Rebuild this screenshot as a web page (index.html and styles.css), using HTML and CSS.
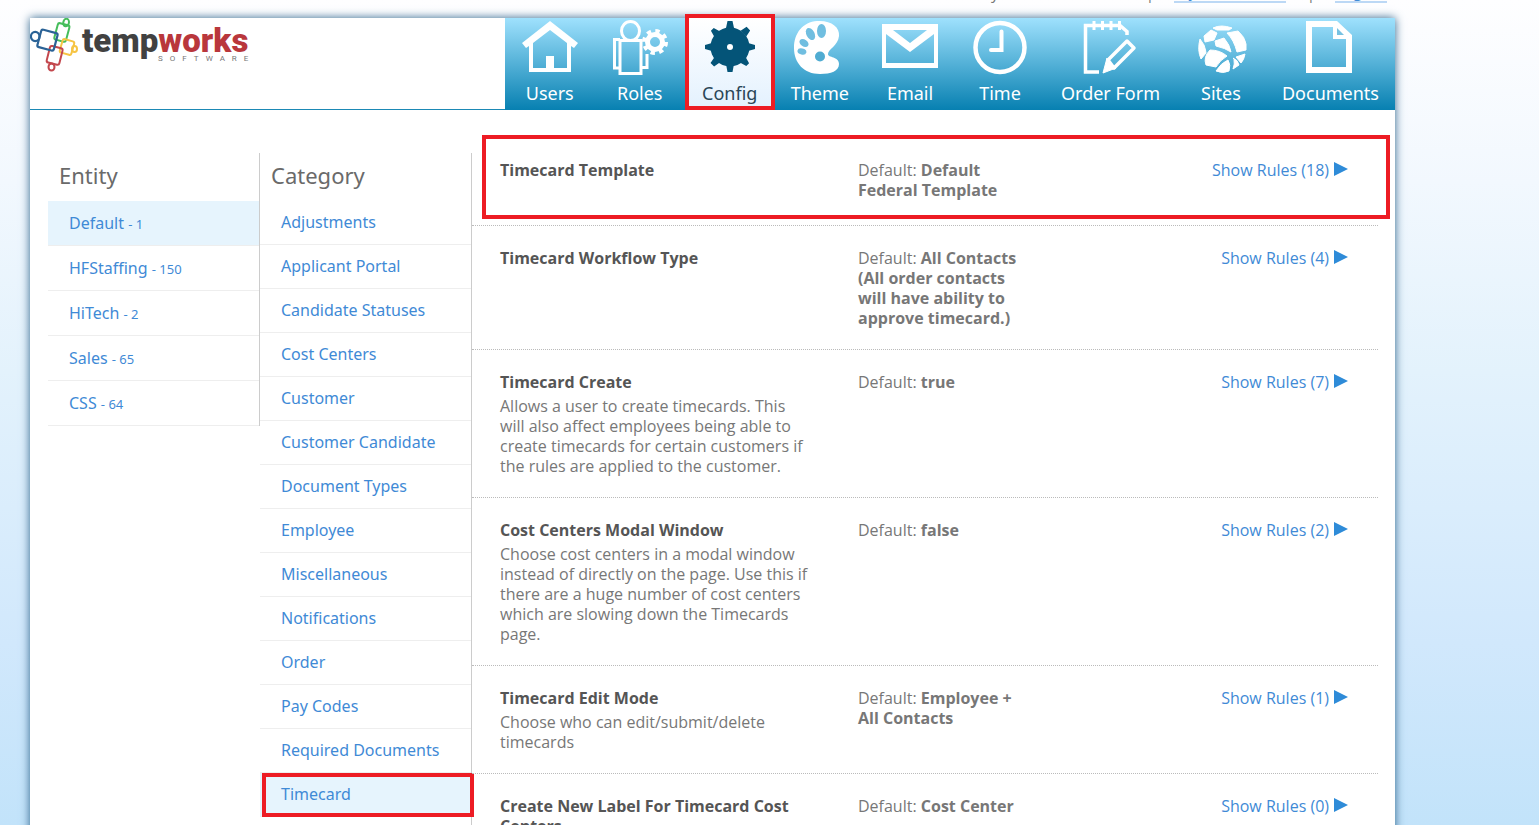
FILE: index.html
```html
<!DOCTYPE html>
<html lang="en">
<head>
    <meta charset="UTF-8">
    <title>TempWorks - Config</title>
    <link rel="stylesheet" href="styles.css">
</head>
<body>
    <div class="top-links">
        <span>My Timecard Admin</span>
        <span>|</span>
        <a href="#">My Documents</a>
        <span>|</span>
        <a href="#">Logout</a>
    </div>

    <div class="page">
        <header>
            <div class="logo">
                <svg class="logo-mark" width="48" height="54" viewBox="0 0 48 54" fill="none" stroke-width="2">
                    <g stroke="#45bd5b"><rect x="26" y="6" width="12" height="17" rx="2" transform="rotate(15 32 14)"/><ellipse cx="36" cy="4.500" rx="2.800" ry="3.800" transform="rotate(12 36 5)"/></g>
                    <g stroke="#f6c443"><rect x="31" y="22" width="12" height="14" rx="2" transform="rotate(16 37 29)"/><ellipse cx="44.500" cy="31" rx="2.500" ry="3"/></g>
                    <g stroke="#c3474d"><rect x="18" y="29" width="13" height="17" rx="2" transform="rotate(14 25 38)"/><ellipse cx="21.500" cy="49" rx="3" ry="3.500"/></g>
                    <g stroke="#2a6296" stroke-width="2.200"><rect x="9" y="13" width="17" height="18" rx="2" transform="rotate(15 17 22)"/><ellipse cx="5.200" cy="18.500" rx="4.300" ry="4.600"/></g>
                </svg>
                <div class="logo-text">
                    <h1>temp<span>works</span></h1>
                    <h4>SOFTWARE</h4>
                </div>
            </div>
            <nav>
                <ul>
                    <li><a href="#">
                        <svg width="56" height="56" viewBox="0 0 56 56"><path d="M28 2 56 24l-4 5-3-2v26H7V27l-3 2-4-5zM28 11 11 24v25h13V37h8v12h13V24z" fill="#fff" fill-rule="evenodd"/></svg>
                        Users</a></li>
                    <li><a href="#">
                        <svg width="56" height="56" viewBox="0 0 56 56" fill="none" stroke="#fff" stroke-width="3"><ellipse cx="18.500" cy="12" rx="9" ry="9.500"/><path d="M8 21.500H29V54.500H8zM8 20.500H2.500V49H8M29 48.500H35V35M29 21V34"/><circle cx="43" cy="23" r="7.500" stroke-width="5"/><circle cx="43" cy="23" r="11" stroke-width="4" stroke-dasharray="4.320 4.320"/></svg>
                        Roles</a></li>
                    <li class="active"><a href="#">
                        <svg width="56" height="56" viewBox="0 0 56 56"><g fill="#045478"><path d="M24 9 25.500 2h5L32 9zM24 45l1.500 8h5l1.500-8zM10 24l-7 2v4l7 2zM46 24l7 2v4l-7 2z"/><path d="M24 9 25.500 2h5L32 9zM24 45l1.500 8h5l1.500-8zM10 24l-7 2v4l7 2zM46 24l7 2v4l-7 2z" transform="rotate(45 28 28)"/><circle cx="28" cy="28" r="19.500"/></g><circle cx="28" cy="28" r="3" fill="#fff"/></svg>
                        Config</a></li>
                    <li><a href="#">
                        <svg width="56" height="56" viewBox="0 0 56 56"><path d="M25 2C39 1 48 8 47 17c-1 10-11 13-11 18 0 4 11 2 11 10 0 7-8 10-19 10C12 55 2 44 2 29 2 14 11 3 25 2z" fill="#fff"/><g fill="#70bee0"><ellipse cx="29.500" cy="12" rx="4.500" ry="7"/><ellipse cx="18.500" cy="15" rx="4" ry="6.500" transform="rotate(-28 18.500 15)"/><ellipse cx="12" cy="24" rx="3.500" ry="5" transform="rotate(-55 12 24)"/><ellipse cx="10" cy="32.500" rx="4.500" ry="3" transform="rotate(12 10 32)"/><circle cx="28" cy="37.500" r="5" fill="#50acd2"/></g></svg>
                        Theme</a></li>
                    <li><a href="#">
                        <svg width="56" height="56" viewBox="0 0 56 56"><path d="M0 5h56v44H0zM4 15v29h48V15L28 33zM11 11l17 13 17-13z" fill="#fff" fill-rule="evenodd"/></svg>
                        Email</a></li>
                    <li><a href="#">
                        <svg width="56" height="56" viewBox="0 0 56 56" fill="none" stroke="#fff"><circle cx="28" cy="28.500" r="24.500" stroke-width="4.500"/><path d="M29.500 12.500v18.500H19" stroke-width="4" stroke-linecap="round"/></svg>
                        Time</a></li>
                    <li><a href="#">
                        <svg width="56" height="56" viewBox="0 0 56 56" fill="none" stroke="#fff" stroke-width="3.500"><path d="M17 53H3.500V6.500H38l7 6V16"/><path d="M12 2v9M20.500 2v9M29 2v9M37.500 2v9" stroke-width="3"/><path d="M26 41 45 22l7 7-20 20zM26 41l6 8" stroke-linejoin="round"/><path d="M25 39 21 54l13-5-2 1-6-6z" fill="#fff" stroke-width="1"/></svg>
                        Order Form</a></li>
                    <li><a href="#">
                        <svg width="56" height="56" viewBox="0 0 56 56" fill="#fff" stroke="#fff" stroke-linejoin="round"><path d="M20 9Q28 5 39 9L36 11H24zM11 17l7-6 6 3-3 7-9 2zM34 14l11-2q7 6 8 13v6l-9 2q-3-12-10-19zM22 22l9-3q6 7 7 14-6-4-15-6zM7 20l4 6q2 6 2 8l-5 6q-4-9-1-20zM17 31q10 0 17 6-7 4-11 11l-10-2q-3-8 4-15zM35 41q3 5 1 11-6 3-13 0 5-8 12-11zM40 39l1 1q1 5-1 10l6-4q-1-5-6-7zM43 38l9-3q-1 6-4 9z"/></svg>
                        Sites</a></li>
                    <li><a href="#">
                        <svg width="56" height="56" viewBox="0 0 56 56"><path d="M4 2h31l15 14v38H4zM10 8v40h34V20H31V8z" fill="#fff" fill-rule="evenodd"/><path d="M35 9v7h7z" fill="#78c2e2"/></svg>
                        Documents</a></li>
                </ul>
            </nav>
        </header>

        <main class="container">
            <section class="column entity">
                <h2>Entity</h2>
                <ul>
                    <li class="selected"><a href="#">Default <small>- 1</small></a></li>
                    <li><a href="#">HFStaffing <small>- 150</small></a></li>
                    <li><a href="#">HiTech <small>- 2</small></a></li>
                    <li><a href="#">Sales <small>- 65</small></a></li>
                    <li><a href="#">CSS <small>- 64</small></a></li>
                </ul>
            </section>

            <section class="column category">
                <h2>Category</h2>
                <ul>
                    <li><a href="#">Adjustments</a></li>
                    <li><a href="#">Applicant Portal</a></li>
                    <li><a href="#">Candidate Statuses</a></li>
                    <li><a href="#">Cost Centers</a></li>
                    <li><a href="#">Customer</a></li>
                    <li><a href="#">Customer Candidate</a></li>
                    <li><a href="#">Document Types</a></li>
                    <li><a href="#">Employee</a></li>
                    <li><a href="#">Miscellaneous</a></li>
                    <li><a href="#">Notifications</a></li>
                    <li><a href="#">Order</a></li>
                    <li><a href="#">Pay Codes</a></li>
                    <li><a href="#">Required Documents</a></li>
                    <li class="selected marked"><a href="#">Timecard</a></li>
                </ul>
            </section>

            <section class="rules">
                <div class="rule marked">
                    <div class="rule-info">
                        <h3>Timecard Template</h3>
                    </div>
                    <p class="rule-default">Default: <b>Default Federal Template</b></p>
                    <a class="show-rules" href="#">Show Rules (18)</a>
                </div>
                <div class="rule">
                    <div class="rule-info">
                        <h3>Timecard Workflow Type</h3>
                    </div>
                    <p class="rule-default">Default: <b>All Contacts (All order contacts will have ability to approve timecard.)</b></p>
                    <a class="show-rules" href="#">Show Rules (4)</a>
                </div>
                <div class="rule">
                    <div class="rule-info">
                        <h3>Timecard Create</h3>
                        <p>Allows a user to create timecards. This will also affect employees being able to create timecards for certain customers if the rules are applied to the customer.</p>
                    </div>
                    <p class="rule-default">Default: <b>true</b></p>
                    <a class="show-rules" href="#">Show Rules (7)</a>
                </div>
                <div class="rule">
                    <div class="rule-info">
                        <h3>Cost Centers Modal Window</h3>
                        <p>Choose cost centers in a modal window instead of directly on the page. Use this if there are a huge number of cost centers which are slowing down the Timecards page.</p>
                    </div>
                    <p class="rule-default">Default: <b>false</b></p>
                    <a class="show-rules" href="#">Show Rules (2)</a>
                </div>
                <div class="rule">
                    <div class="rule-info">
                        <h3>Timecard Edit Mode</h3>
                        <p>Choose who can edit/submit/delete timecards</p>
                    </div>
                    <p class="rule-default">Default: <b>Employee + All Contacts</b></p>
                    <a class="show-rules" href="#">Show Rules (1)</a>
                </div>
                <div class="rule">
                    <div class="rule-info">
                        <h3>Create New Label For Timecard Cost Centers</h3>
                    </div>
                    <p class="rule-default">Default: <b>Cost Center</b></p>
                    <a class="show-rules" href="#">Show Rules (0)</a>
                </div>
            </section>
        </main>
    </div>
</body>
</html>
```
FILE: styles.css
```css
* {
    box-sizing: border-box;
}

body {
    font-family: "Trebuchet MS", "Open Sans", sans-serif;
    font-size: 16px;
    line-height: 20px;
    color: #777;
    margin: 0;
    height: 100vh;
    overflow: hidden;
    background: linear-gradient(to bottom, #fefeff 0%, #f2f8fe 22%, #e3f2fc 45%, #d1e8fc 78%, #c2e3fa 100%);
}

h1, h2, h3, h4, p, ul {
    margin: 0;
    padding: 0;
    font-weight: normal;
}

ul {
    list-style-type: none;
}

a {
    color: #3f8ad6;
    text-decoration: none;
}

/* account links above the page */
.top-links {
    display: flex;
    justify-content: flex-end;
    align-items: flex-end;
    gap: 20px;
    height: 18px;
    padding: 0 152px 15px 0;
}

.top-links a {
    border-bottom: 2px solid #bcd8f5;
}

.page {
    margin: 0 144px 0 30px;
    min-height: 100vh;
    background-color: #fff;
    box-shadow: 0 0 9px #2b628a;
}

header {
    display: flex;
    justify-content: space-between;
    height: 92px;
    border-bottom: 1px solid #1b89b5;
}

.logo {
    display: flex;
    gap: 4px;
}

.logo-text {
    padding-top: 7px;
}

.logo h1 {
    font-family: "Roboto", sans-serif;
    font-weight: 900;
    font-size: 33px;
    line-height: 32px;
    color: #414141;
}

.logo h1 span {
    color: #b9373c;
}

.logo h4 {
    font-family: "Roboto", sans-serif;
    font-size: 8px;
    line-height: 4px;
    letter-spacing: 7px;
    text-align: right;
    margin-right: -7px;
    color: #777;
}

nav ul {
    display: flex;
    height: 92px;
    background: linear-gradient(to bottom, #9fe1fd, #0780b1);
}

nav li {
    position: relative;
    min-width: 90px;
}

nav a {
    display: flex;
    flex-direction: column;
    align-items: center;
    padding: 1px 16px 0;
    font-family: "Noto Sans", sans-serif;
    font-size: 18px;
    line-height: 36px;
    color: #fff;
}

nav .active {
    background: linear-gradient(to bottom, #fff, #e3f1fe);
}

nav .active a {
    color: #2a4557;
}

/* red highlight frames */
.active::after,
.marked::after {
    content: "";
    position: absolute;
    border: 4px solid #ed1c24;
    pointer-events: none;
}

.active::after {
    inset: -4px 0 0 0;
}

.container {
    display: flex;
    align-items: flex-start;
    padding: 28px 17px 0 18px;
}

.column {
    flex: 0 0 212px;
    margin-top: 15px;
    border-right: 1px solid #ccc;
    font-family: "Noto Sans", sans-serif;
}

.column h2 {
    padding: 0 0 4px 11px;
    font-size: 22px;
    line-height: 44px;
    color: #6a6a6a;
}

.column li {
    position: relative;
    border-bottom: 1px solid #eee;
}

.column li a {
    display: block;
    padding-left: 21px;
    line-height: 43px;
}

.entity li a {
    line-height: 44px;
}

.column small {
    font-size: 13px;
    line-height: 20px;
}

.column .selected {
    background-color: #e6f4fd;
}

.category {
    min-height: 100vh;
}

.category .marked::after {
    inset: 0 -3px -1px 2px;
}

.rules {
    flex: 1;
}

.rule {
    position: relative;
    display: flex;
    min-height: 88px;
    padding: 22px 30px 21px 28px;
    border-bottom: 1px dotted #bbb;
}

.rules .marked::after {
    inset: -3px -12px 6px 10px;
}

.rule-info {
    flex: 0 0 310px;
    margin-right: 48px;
}

.rule-info h3 {
    font-size: 16px;
    font-weight: bold;
    color: #555;
}

.rule-info p {
    margin-top: 4px;
}

.rule-default {
    flex: 0 0 170px;
}

.show-rules {
    margin-left: auto;
}

.show-rules::after {
    content: "";
    display: inline-block;
    margin-left: 5px;
    border: solid transparent;
    border-width: 7px 0 7px 14px;
    border-left-color: #2e8bd8;
}
```
